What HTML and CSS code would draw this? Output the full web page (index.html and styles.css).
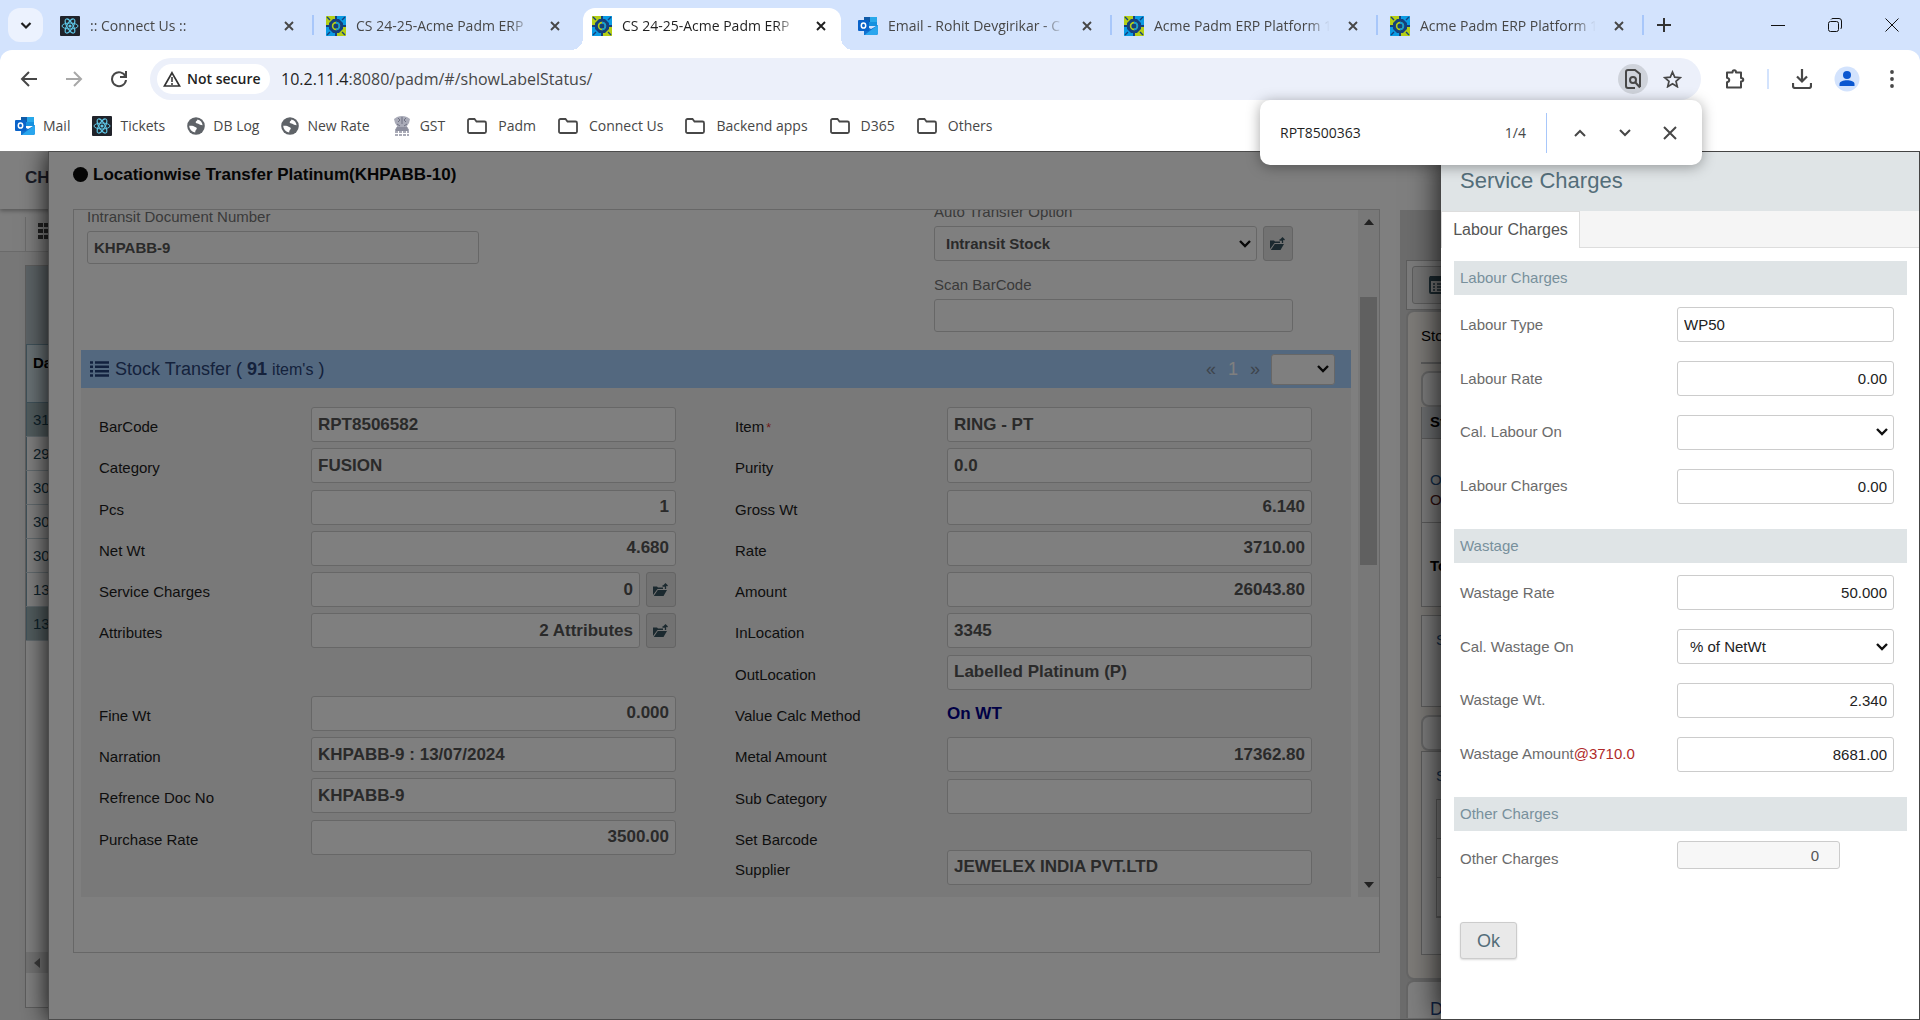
FILE: index.html
```html
<!DOCTYPE html>
<html lang="en">

<head>
  <meta charset="UTF-8">
  <meta name="viewport" content="width=device-width, initial-scale=1.0">
  <title>CS 24-25-Acme Padm ERP</title>
  <link rel="stylesheet" href="styles.css">
</head>

<body>
  <!-- shared icons -->
  <svg class="sprite" aria-hidden="true">
    <symbol id="i-react" viewBox="0 0 20 20">
      <rect width="20" height="20" rx="1" fill="#20232a" />
      <g fill="none" stroke="#5fc8e8" stroke-width="1">
        <ellipse cx="10" cy="10" rx="8" ry="3" />
        <ellipse cx="10" cy="10" rx="8" ry="3" transform="rotate(60 10 10)" />
        <ellipse cx="10" cy="10" rx="8" ry="3" transform="rotate(120 10 10)" />
      </g>
      <circle cx="10" cy="10" r="1.6" fill="#5fc8e8" />
    </symbol>
    <symbol id="i-erp" viewBox="0 0 20 20">
      <rect width="20" height="20" fill="#15407c" />
      <path d="M0 0h9v3H7L5 5 3 7v2H0z" fill="#b5cf16" />
      <path d="M11 0h9v9h-3V7l-4-4h-2z" fill="#0a9be3" />
      <path d="M0 11h3v2l4 4h2v3H0z" fill="#0a9be3" />
      <path d="M20 11v9h-9v-3h2l4-4v-2z" fill="#b5cf16" />
      <circle cx="10" cy="10" r="3.4" fill="none" stroke="#b5cf16" stroke-width="1.6" />
      <path d="M10 6.6a3.4 3.4 0 0 1 0 6.8" fill="none" stroke="#0a9be3" stroke-width="1.6" />
      <path d="M1 1l3 3M19 1l-3 3M1 19l3-3M19 19l-3-3" stroke="#15407c" stroke-width="1.4" />
    </symbol>
    <symbol id="i-outlook" viewBox="0 0 20 20">
      <path d="M6 1h13v9H6z" fill="#1490df" />
      <path d="M6 1h6v5H6z" fill="#0f5ba8" />
      <path d="M12 1h7v5h-7z" fill="#28a8ea" />
      <path d="M6 9l7 4 7-4v8a2 2 0 0 1-2 2H6z" fill="#1373cf" />
      <path d="M20 9L7 18.500a2 2 0 0 0 1 .5h10a2 2 0 0 0 2-2z" fill="#2aa6ee" />
      <rect y="4" width="11" height="11" rx="1" fill="#0a63c9" />
      <ellipse cx="5.500" cy="9.500" rx="2.200" ry="2.600" fill="none" stroke="#fff" stroke-width="1.500" />
    </symbol>
    <symbol id="i-globe" viewBox="0 0 18 18">
      <circle cx="9" cy="9" r="8.800" fill="#5f6368" />
      <path d="M2.200 8.800c2 0 3.800-.6 5 .6 1 1 2.600.4 2.600 2.200 0 1.300-1.600 1.200-1.600 4A6.900 6.900 0 0 1 2.200 8.800zM10.500 2.400c-.4 1.500-1.800 1.500-1.800 2.800 0 1.200 1.600.8 2.600 1.600 1.200 1 2.200 1 4.300 1.400A6.800 6.800 0 0 0 10.500 2.400z" fill="#fff" />
    </symbol>
    <symbol id="i-emblem" viewBox="0 0 20 20">
      <path d="M5 1q5-2 10 0l3 2-1 4-2 3v2l2 1v2H3v-2l2-1v-2L3 7 2 3z" fill="#a9abb8" />
      <path d="M6 2l2 2-2 2M14 2l-2 2 2 2M10 1v7M5 8l3 2M15 8l-3 2M4 12h12M4 14h12" stroke="#6f7182" fill="none" />
      <path d="M3 16h14M3 19h14" stroke="#8e90a0" stroke-width="1.400" stroke-dasharray="3 1" />
    </symbol>
    <symbol id="i-folder" viewBox="0 0 20 16">
      <path d="M2.500 1h5l2 2.500h8a1.500 1.500 0 0 1 1.500 1.500v8.500a1.500 1.500 0 0 1-1.500 1.500h-15A1.500 1.500 0 0 1 1 13.500v-11A1.500 1.500 0 0 1 2.500 1z" fill="none" stroke="#474747" stroke-width="1.800" />
    </symbol>
    <symbol id="i-close" viewBox="0 0 16 16">
      <path d="M4 4l8 8M12 4l-8 8" stroke="currentColor" stroke-width="1.900" fill="none" />
    </symbol>
    <symbol id="i-open" viewBox="0 0 16 14">
      <path d="M0 3.500h4l1 1h5V6H4.500L0 12zM4.800 7H14l-3.500 6H.8z" fill="currentColor" />
      <path d="M9.500 3h3M12.500 6V1.500M10.500 3l2-2 2 2" stroke="currentColor" stroke-width="1.300" fill="none" />
    </symbol>
  </svg>

  <header class="browser">
    <div class="tab-strip">
      <button class="tab-search" aria-label="Search tabs">
        <svg width="12" height="12" viewBox="0 0 12 12"><path d="M1.500 4l4.500 4.500L10.500 4" fill="none" stroke="#1f1f1f" stroke-width="2.200" /></svg>
      </button>
      <div class="tab">
        <svg class="favicon"><use href="#i-react" /></svg>
        <span>:: Connect Us ::</span>
        <button class="tab-close" aria-label="Close"><svg><use href="#i-close" /></svg></button>
      </div>
      <i class="tab-sep"></i>
      <div class="tab">
        <svg class="favicon"><use href="#i-erp" /></svg>
        <span>CS 24-25-Acme Padm ERP</span>
        <button class="tab-close" aria-label="Close"><svg><use href="#i-close" /></svg></button>
      </div>
      <i class="tab-sep hidden"></i>
      <div class="tab active">
        <svg class="favicon"><use href="#i-erp" /></svg>
        <span>CS 24-25-Acme Padm ERP</span>
        <button class="tab-close" aria-label="Close"><svg><use href="#i-close" /></svg></button>
      </div>
      <i class="tab-sep hidden"></i>
      <div class="tab">
        <svg class="favicon"><use href="#i-outlook" /></svg>
        <span>Email - Rohit Devgirikar - C</span>
        <button class="tab-close" aria-label="Close"><svg><use href="#i-close" /></svg></button>
      </div>
      <i class="tab-sep"></i>
      <div class="tab">
        <svg class="favicon"><use href="#i-erp" /></svg>
        <span>Acme Padm ERP Platform 1</span>
        <button class="tab-close" aria-label="Close"><svg><use href="#i-close" /></svg></button>
      </div>
      <i class="tab-sep"></i>
      <div class="tab">
        <svg class="favicon"><use href="#i-erp" /></svg>
        <span>Acme Padm ERP Platform 1</span>
        <button class="tab-close" aria-label="Close"><svg><use href="#i-close" /></svg></button>
      </div>
      <i class="tab-sep"></i>
      <button class="new-tab" aria-label="New tab">
        <svg width="14" height="14" viewBox="0 0 14 14"><path d="M7 0v14M0 7h14" stroke="#333" stroke-width="2" /></svg>
      </button>
      <div class="window-controls">
        <button aria-label="Minimise"><svg width="14" height="14" viewBox="0 0 14 14"><path d="M0 7.500h14" stroke="#111" /></svg></button>
        <button aria-label="Restore"><svg width="14" height="14" viewBox="0 0 14 14"><rect x=".5" y="3.500" width="10" height="10" rx="2" fill="none" stroke="#111" /><path d="M3 1.500q.5-1 2-1h6a2.500 2.500 0 0 1 2.500 2.500v6q0 1.500-1 2" fill="none" stroke="#111" /></svg></button>
        <button aria-label="Close window"><svg width="14" height="14" viewBox="0 0 14 14"><path d="M.5.5l13 13M13.500.5l-13 13" stroke="#111" /></svg></button>
      </div>
    </div>

    <div class="toolbar">
      <button class="nav" aria-label="Back"><svg width="18" height="18" viewBox="0 0 18 18"><path d="M17 9H2M9 2L2 9l7 7" fill="none" stroke="#474747" stroke-width="2" /></svg></button>
      <button class="nav" aria-label="Forward"><svg width="18" height="18" viewBox="0 0 18 18"><path d="M1 9h15M9 2l7 7-7 7" fill="none" stroke="#a8a8a8" stroke-width="2" /></svg></button>
      <button class="nav" aria-label="Reload"><svg width="18" height="18" viewBox="0 0 18 18"><path d="M15.500 6.500A7 7 0 1 0 16 10" fill="none" stroke="#474747" stroke-width="2" /><path d="M16 1v6h-6" fill="none" stroke="#474747" stroke-width="2" /></svg></button>
      <div class="omnibox">
        <button class="not-secure">
          <svg width="18" height="16" viewBox="0 0 18 16"><path d="M9 1.800L16.600 15H1.400z" fill="none" stroke="#333" stroke-width="1.700" /><path d="M9 6v5M9 12v2" stroke="#333" stroke-width="1.500" /></svg>
          Not secure
        </button>
        <span class="url"><b>10.2.11.4</b>:8080/padm/#/showLabelStatus/</span>
        <button class="round on" aria-label="Find in page"><svg width="18" height="20" viewBox="0 0 18 20"><path d="M11 19H4a2 2 0 0 1-2-2V3a2 2 0 0 1 2-2h7l5 4v13" fill="none" stroke="#474747" stroke-width="2" /><circle cx="9" cy="11" r="3" fill="none" stroke="#474747" stroke-width="2" /><path d="M11 13l5 5.500" stroke="#474747" stroke-width="2" /></svg></button>
        <button class="round" aria-label="Bookmark"><svg width="19" height="18" viewBox="0 0 19 18"><path d="M9.500 2l2.200 5.100 5.500.5-4.200 3.700 1.300 5.400-4.800-2.900-4.800 2.900L6 11.300 1.800 7.600l5.500-.5z" fill="none" stroke="#474747" stroke-width="1.700" /></svg></button>
      </div>
      <div class="toolbar-right">
        <button aria-label="Extensions"><svg width="20" height="20" viewBox="0 0 20 20"><path d="M2 3.500h5.500c0-3 3.500-3 3.500 0h5v5.500c3 0 3 3.500 0 3.500v6H2v-5.200c3-.6 3-4 0-4.600z" fill="none" stroke="#474747" stroke-width="2" stroke-linejoin="round" /></svg></button>
        <i></i>
        <button aria-label="Downloads"><svg width="20" height="20" viewBox="0 0 20 20"><path d="M10 0v12M5 7.500l5 5 5-5M1 14v3a2 2 0 0 0 2 2h14a2 2 0 0 0 2-2v-3" fill="none" stroke="#474747" stroke-width="2.200" /></svg></button>
        <button aria-label="Profile"><svg width="26" height="26" viewBox="0 0 26 26"><circle cx="13" cy="13" r="12.500" fill="#d3e3fd" /><circle cx="13" cy="9" r="4" fill="#0b57d0" /><path d="M5.500 20v-2c0-5 15-5 15 0v2z" fill="#0b57d0" /></svg></button>
        <button aria-label="Menu"><svg width="6" height="20" viewBox="0 0 6 20"><g fill="#474747"><circle cx="3" cy="3" r="1.900" /><circle cx="3" cy="10" r="1.900" /><circle cx="3" cy="17" r="1.900" /></g></svg></button>
      </div>
    </div>

    <nav class="bookmarks">
      <a href="#"><svg width="20" height="20"><use href="#i-outlook" /></svg>Mail</a>
      <a href="#"><svg width="20" height="20"><use href="#i-react" /></svg>Tickets</a>
      <a href="#"><svg width="18" height="18"><use href="#i-globe" /></svg>DB Log</a>
      <a href="#"><svg width="18" height="18"><use href="#i-globe" /></svg>New Rate</a>
      <a href="#"><svg width="20" height="20"><use href="#i-emblem" /></svg>GST</a>
      <a href="#" class="folder"><svg width="20" height="16"><use href="#i-folder" /></svg>Padm</a>
      <a href="#" class="folder"><svg width="20" height="16"><use href="#i-folder" /></svg>Connect Us</a>
      <a href="#" class="folder"><svg width="20" height="16"><use href="#i-folder" /></svg>Backend apps</a>
      <a href="#" class="folder"><svg width="20" height="16"><use href="#i-folder" /></svg>D365</a>
      <a href="#" class="folder"><svg width="20" height="16"><use href="#i-folder" /></svg>Others</a>
    </nav>

    <div class="find-bar">
      <input type="text" value="RPT8500363" aria-label="Find">
      <span>1/4</span>
      <i></i>
      <button aria-label="Previous"><svg width="14" height="14" viewBox="0 0 14 14"><path d="M2 10l5-5 5 5" fill="none" stroke="#474747" stroke-width="2" /></svg></button>
      <button aria-label="Next"><svg width="14" height="14" viewBox="0 0 14 14"><path d="M2 4l5 5 5-5" fill="none" stroke="#474747" stroke-width="2" /></svg></button>
      <button aria-label="Close find bar"><svg width="14" height="14" viewBox="0 0 14 14"><path d="M1 1l12 12M13 1L1 13" fill="none" stroke="#474747" stroke-width="2" /></svg></button>
    </div>
  </header>

  <main class="app">
    <!-- page behind the modal -->
    <div class="page">
      <div class="page-header">CH</div>
      <div class="page-tools">
        <div>
          <svg width="18" height="16" viewBox="0 0 18 16"><path d="M0 0h5v4H0zM6 0h5v4H6zM12 0h5v4h-5zM0 6h5v4H0zM6 6h5v4H6zM12 6h5v4h-5zM0 12h5v4H0zM6 12h5v4H6zM12 12h5v4h-5z" fill="#444" /></svg>
        </div>
      </div>
      <div class="page-panel">
        <div class="panel-band"></div>
        <table>
          <thead>
            <tr><th>Da</th></tr>
          </thead>
          <tbody>
            <tr class="selected"><td>31</td></tr>
            <tr><td>29</td></tr>
            <tr><td>30</td></tr>
            <tr><td>30</td></tr>
            <tr><td>30</td></tr>
            <tr><td>13</td></tr>
            <tr class="selected"><td>13</td></tr>
          </tbody>
        </table>
        <div class="panel-scroll">
          <svg width="6" height="10" viewBox="0 0 6 10"><path d="M6 0v10L0 5z" fill="#777" /></svg>
        </div>
      </div>
    </div>

    <section class="modal">
      <h1><i></i>Locationwise Transfer Platinum(KHPABB-10)</h1>
      <div class="modal-body">
        <div class="box">
          <div class="scroll">
            <div class="content">
              <div class="filters">
                <div class="filter-left">
                  <label for="docNo">Intransit Document Number</label>
                  <input id="docNo" type="text" value="KHPABB-9">
                </div>
                <div class="filter-right">
                  <label for="option">Auto Transfer Option</label>
                  <div class="with-btn">
                    <select id="option"><option>Intransit Stock</option></select>
                    <button class="open-btn" aria-label="Open"><svg width="16" height="14"><use href="#i-open" /></svg></button>
                  </div>
                  <label for="scan" class="second">Scan BarCode</label>
                  <input id="scan" type="text">
                </div>
              </div>
              <div class="stock-header">
                <svg width="19" height="16" viewBox="0 0 19 16"><path d="M0 1.500h3M5 1.500h14M0 5.800h3M5 5.800h14M0 10.200h3M5 10.200h14M0 14.500h3M5 14.500h14" stroke="#24427c" stroke-width="2.400" /></svg>
                <h2>Stock Transfer ( <b>91</b> <small>item's</small> )</h2>
                <div class="pager">
                  <a href="#">«</a>
                  <a href="#" class="current">1</a>
                  <a href="#">»</a>
                  <select aria-label="Page"><option></option></select>
                </div>
              </div>
              <div class="stock-form">
                <div class="col-left">
                  <div class="row"><label for="f1">BarCode</label><input id="f1" type="text" value="RPT8506582"></div>
                  <div class="row"><label for="f2">Category</label><input id="f2" type="text" value="FUSION"></div>
                  <div class="row"><label for="f3">Pcs</label><input id="f3" class="num" type="text" value="1"></div>
                  <div class="row"><label for="f4">Net Wt</label><input id="f4" class="num" type="text" value="4.680"></div>
                  <div class="row"><label for="f5">Service Charges</label>
                    <div class="with-btn"><input id="f5" class="num" type="text" value="0"><button class="open-btn" aria-label="Open"><svg width="16" height="14"><use href="#i-open" /></svg></button></div>
                  </div>
                  <div class="row"><label for="f6">Attributes</label>
                    <div class="with-btn"><input id="f6" class="num" type="text" value="2 Attributes"><button class="open-btn" aria-label="Open"><svg width="16" height="14"><use href="#i-open" /></svg></button></div>
                  </div>
                  <div class="row"></div>
                  <div class="row"><label for="f8">Fine Wt</label><input id="f8" class="num" type="text" value="0.000"></div>
                  <div class="row"><label for="f9">Narration</label><input id="f9" type="text" value="KHPABB-9 : 13/07/2024"></div>
                  <div class="row"><label for="f10">Refrence Doc No</label><input id="f10" type="text" value="KHPABB-9"></div>
                  <div class="row"><label for="f11">Purchase Rate</label><input id="f11" class="num" type="text" value="3500.00"></div>
                </div>
                <div class="col-right">
                  <div class="row"><label for="g1">Item<sup>*</sup></label><input id="g1" type="text" value="RING - PT"></div>
                  <div class="row"><label for="g2">Purity</label><input id="g2" type="text" value="0.0"></div>
                  <div class="row"><label for="g3">Gross Wt</label><input id="g3" class="num" type="text" value="6.140"></div>
                  <div class="row"><label for="g4">Rate</label><input id="g4" class="num" type="text" value="3710.00"></div>
                  <div class="row"><label for="g5">Amount</label><input id="g5" class="num" type="text" value="26043.80"></div>
                  <div class="row"><label for="g6">InLocation</label><input id="g6" type="text" value="3345"></div>
                  <div class="row"><label for="g7">OutLocation</label><input id="g7" type="text" value="Labelled Platinum (P)"></div>
                  <div class="row"><span>Value Calc Method</span><b>On WT</b></div>
                  <div class="row"><label for="g9">Metal Amount</label><input id="g9" class="num" type="text" value="17362.80"></div>
                  <div class="row"><label for="g10">Sub Category</label><input id="g10" type="text"></div>
                  <div class="row"><span>Set Barcode</span></div>
                  <div class="row"><label for="g12">Supplier</label><input id="g12" type="text" value="JEWELEX INDIA PVT.LTD"></div>
                </div>
              </div>
            </div>
            <div class="scrollbar">
              <svg width="10" height="6" viewBox="0 0 10 6"><path d="M0 6l5-6 5 6z" fill="#444" /></svg>
              <div class="thumb"></div>
              <svg width="10" height="6" viewBox="0 0 10 6"><path d="M0 0l5 6 5-6z" fill="#444" /></svg>
            </div>
          </div>
        </div>

        <aside class="side">
          <div class="side-tools">
            <button aria-label="List"><svg width="22" height="18" viewBox="0 0 22 18"><rect x="1" y="1" width="20" height="16" rx="1" fill="none" stroke="#37525e" stroke-width="2" /><path d="M1 0h20v5H1z" fill="#37525e" /><path d="M4 8h2M8 8h10M4 11h2M8 11h10M4 14h2M8 14h10" stroke="#37525e" stroke-width="1.500" /></svg></button>
          </div>
          <div class="card">
            <h3>Sto</h3>
            <div class="side-tab"></div>
            <table class="side-table">
              <thead><tr><th>St</th></tr></thead>
              <tbody>
                <tr><td><a href="#">O</a><br><span>O</span></td></tr>
                <tr><td><b>To</b></td></tr>
              </tbody>
            </table>
            <div class="side-block"><a href="#">S</a></div>
            <div class="side-tab"></div>
            <div class="side-block tall">
              <a href="#">S</a>
              <div class="cells"><i></i><i></i><i></i></div>
            </div>
          </div>
          <div class="card next"><h3>D</h3></div>
        </aside>
      </div>
    </section>

    <div class="backdrop"></div>

    <section class="drawer">
      <h2>Service Charges</h2>
      <div class="drawer-tabs"><button>Labour Charges</button></div>
      <div class="drawer-body">
        <h3>Labour Charges</h3>
        <div class="fields">
          <div class="field"><label for="d1">Labour Type</label><input id="d1" type="text" value="WP50"></div>
          <div class="field"><label for="d2">Labour Rate</label><input id="d2" class="num" type="text" value="0.00"></div>
          <div class="field"><label for="d3">Cal. Labour On</label><select id="d3"><option></option></select></div>
          <div class="field"><label for="d4">Labour Charges</label><input id="d4" class="num" type="text" value="0.00"></div>
        </div>
        <h3>Wastage</h3>
        <div class="fields">
          <div class="field"><label for="d5">Wastage Rate</label><input id="d5" class="num" type="text" value="50.000"></div>
          <div class="field"><label for="d6">Cal. Wastage On</label><select id="d6"><option>% of NetWt</option></select></div>
          <div class="field"><label for="d7">Wastage Wt.</label><input id="d7" class="num" type="text" value="2.340"></div>
          <div class="field"><label for="d8">Wastage Amount<em>@3710.0</em></label><input id="d8" class="num" type="text" value="8681.00"></div>
        </div>
        <h3>Other Charges</h3>
        <div class="field other"><label for="d9">Other Charges</label><input id="d9" class="num" type="text" value="0" readonly></div>
        <button class="ok">Ok</button>
      </div>
    </section>
  </main>
</body>

</html>
```

FILE: styles.css
```css
* {
  box-sizing: border-box;
}

body {
  margin: 0;
  min-height: 100vh;
  display: flex;
  flex-direction: column;
  font-family: "Liberation Sans", Arial, sans-serif;
  font-size: 15px;
  line-height: 20px;
  background-color: #fff;
}

button,
input,
select {
  font: inherit;
  color: inherit;
}

button {
  display: flex;
  align-items: center;
  justify-content: center;
  padding: 0;
  border: 0;
  background: none;
  cursor: pointer;
}

svg {
  flex: none;
}

a {
  text-decoration: none;
}

h1,
h2,
h3 {
  margin: 0;
  font-weight: normal;
}

.sprite {
  position: absolute;
  width: 0;
  height: 0;
}

/* browser */
.browser {
  position: relative;
  z-index: 2;
  height: 151px;
  background-color: #d3e3fd;
  font-family: "Open Sans", "Noto Sans", sans-serif;
  font-size: 14px;
  color: #474747;
}

.tab-strip {
  display: flex;
  align-items: center;
  height: 50px;
  padding-left: 8px;
}

.tab-search {
  width: 35px;
  height: 34px;
  margin-right: 8px;
  border-radius: 12px;
  background-color: #ecf2fe;
}

.tab {
  position: relative;
  display: flex;
  align-items: center;
  flex: 0 1 258px;
  min-width: 0;
  height: 42px;
  padding: 0 12px 6px 9px;
  align-self: flex-end;
}

.tab .favicon {
  width: 20px;
  height: 20px;
}

.tab span {
  flex: 1;
  min-width: 0;
  margin: 0 10px;
  overflow: hidden;
  white-space: nowrap;
  -webkit-mask-image: linear-gradient(to right, #000 85%, transparent 97%);
  mask-image: linear-gradient(to right, #000 85%, transparent 97%);
}

.tab-close svg {
  width: 16px;
  height: 16px;
}

.tab.active {
  color: #1f1f1f;
  background-color: #fff;
  border-radius: 12px 12px 0 0;
}

.tab.active::before,
.tab.active::after {
  content: "";
  position: absolute;
  bottom: 0;
  width: 12px;
  height: 12px;
}

.tab.active::before {
  left: -12px;
  background: radial-gradient(circle at 0 0, transparent 12px, #fff 12px);
}

.tab.active::after {
  right: -12px;
  background: radial-gradient(circle at 100% 0, transparent 12px, #fff 12px);
}

.tab-sep {
  width: 2px;
  height: 20px;
  margin: 0 3px;
  background-color: #a8c7fa;
}

.tab-sep.hidden {
  visibility: hidden;
}

.new-tab {
  width: 34px;
}

.window-controls {
  display: flex;
  margin-left: auto;
}

.window-controls button {
  width: 57px;
  height: 48px;
}

.toolbar {
  display: flex;
  align-items: center;
  height: 58px;
  padding: 0 6px;
  background-color: #fff;
  border-radius: 12px 12px 0 0;
}

.toolbar .nav {
  width: 45px;
  height: 40px;
}

.omnibox {
  display: flex;
  align-items: center;
  flex: 1;
  height: 42px;
  margin-left: 9px;
  padding: 0 14px 0 7px;
  border-radius: 21px;
  background-color: #ecf0fa;
}

.not-secure {
  justify-content: flex-start;
  gap: 6px;
  width: 113px;
  height: 30px;
  padding-left: 6px;
  border-radius: 15px;
  background-color: #fff;
  color: #1f1f1f;
  font-weight: 600;
  white-space: nowrap;
}

.url {
  flex: 1;
  margin-left: 11px;
  font-size: 16px;
}

.url b {
  font-weight: normal;
  color: #1f1f1f;
}

.round {
  width: 30px;
  height: 30px;
  margin-left: 9px;
  border-radius: 50%;
}

.round.on {
  background-color: #cfd3db;
}

.toolbar-right {
  display: flex;
  align-items: center;
}

.toolbar-right button {
  width: 45px;
  height: 40px;
}

.toolbar-right button:first-child {
  margin-left: 11px;
}

.toolbar-right i {
  width: 2px;
  height: 20px;
  margin: 0 10px;
  background-color: #d3e3fd;
}

.bookmarks {
  display: flex;
  gap: 22px;
  height: 43px;
  padding-left: 15px;
  padding-bottom: 8px;
  background-color: #fff;
}

.bookmarks a {
  display: flex;
  align-items: center;
  gap: 8px;
  color: #474747;
}

.bookmarks .folder {
  gap: 11px;
}

.find-bar {
  position: absolute;
  top: 100px;
  right: 218px;
  display: flex;
  align-items: center;
  width: 442px;
  height: 65px;
  padding: 0 10px 0 20px;
  border-radius: 10px;
  background-color: #fff;
  box-shadow: 0 2px 14px rgba(0, 0, 0, 0.35);
}

.find-bar input {
  flex: 1;
  min-width: 0;
  padding: 0;
  border: 0;
  outline: 0;
  color: #1f1f1f;
}

.find-bar i {
  width: 1px;
  height: 40px;
  margin: 0 10px 0 20px;
  background-color: #a8c7fa;
}

.find-bar button {
  width: 45px;
  height: 40px;
}

/* app: page, modal, backdrop and drawer share one cell */
.app {
  flex: 1;
  display: grid;
  grid-template-columns: minmax(0, 1fr);
  overflow: hidden;
}

.page,
.modal,
.backdrop,
.drawer {
  grid-area: 1 / 1;
}

.page {
  background-color: #efefef;
}

.page-header {
  position: relative;
  height: 58px;
  padding: 17px 25px;
  background-color: #fff;
  box-shadow: 0 2px 4px rgba(0, 0, 0, 0.3);
  font-size: 17px;
  font-weight: bold;
  color: #35394e;
}

.page-tools {
  height: 43px;
  padding: 8px 0 0 25px;
  background-color: #fafafa;
  border-bottom: 1px solid #d5d5d5;
}

.page-tools div {
  height: 34px;
  padding: 6px 12px;
  border-left: 1px solid #d5d5d5;
}

.page-panel {
  display: flex;
  flex-direction: column;
  height: 743px;
  margin: 13px 0 12px 25px;
  border: 1px solid #bbb;
  background-color: #fff;
}

.panel-band {
  height: 78px;
  background-color: #b9c6cc;
}

.page-panel table {
  width: 100%;
  border-collapse: collapse;
  border-left: 1px solid #7fa3b3;
}

.page-panel th {
  height: 58px;
  padding: 8px 6px;
  text-align: left;
  vertical-align: top;
  background-color: #d2e3ea;
  border: 1px solid #7fa3b3;
}

.page-panel td {
  height: 34px;
  padding: 0 6px;
  color: #1a4455;
  border-bottom: 1px solid #c3d3da;
}

.page-panel .selected td {
  background-color: #a3b8bc;
}

.panel-scroll {
  display: flex;
  align-items: center;
  height: 21px;
  margin-top: auto;
  margin-bottom: 34px;
  padding-left: 8px;
  background-color: #e6e6e6;
}

.backdrop {
  z-index: 1;
  background-color: rgba(0, 0, 0, 0.5);
}

/* modal */
.modal {
  z-index: 1;
  display: flex;
  flex-direction: column;
  margin-left: 48px;
  border: 1px solid #999;
  border-width: 1px 0 1px 1px;
  background-color: #fff;
  box-shadow: 0 0 24px rgba(0, 0, 0, 0.9);
}

.modal h1 {
  display: flex;
  align-items: center;
  gap: 5px;
  height: 57px;
  padding: 0 0 12px 24px;
  font-size: 17px;
  font-weight: bold;
  color: #0a0a0a;
}

.modal h1 i {
  width: 15px;
  height: 15px;
  border-radius: 50%;
  background-color: #0a0a0a;
}

.modal-body {
  flex: 1;
  display: flex;
  padding-left: 24px;
}

.box {
  flex: 1;
  min-width: 0;
  margin: 0 20px 66px 0;
  border: 1px solid #cfcfcf;
}

.scroll {
  display: flex;
  overflow: hidden;
}

.content {
  flex: 1;
  min-width: 0;
  padding: 0 7px;
}

.scrollbar {
  display: flex;
  flex-direction: column;
  align-items: center;
  width: 21px;
  padding: 9px 2px;
  background-color: #f1f1f1;
}

.scrollbar .thumb {
  width: 17px;
  height: 268px;
  margin: 72px 0 auto;
  background-color: #c1c1c1;
}

.box input,
.box select {
  width: 100%;
  height: 35px;
  padding: 0 6px;
  border: 1px solid #cfcfcf;
  border-radius: 3px;
  background-color: #fff;
  color: #555;
  font-weight: bold;
}

.box select,
.drawer select {
  appearance: none;
  background-image: url("data:image/svg+xml,%3Csvg xmlns='http://www.w3.org/2000/svg' width='12' height='8' viewBox='0 0 12 8'%3E%3Cpath d='M1 1l5 5 5-5' fill='none' stroke='%23111' stroke-width='2.4'/%3E%3C/svg%3E");
  background-repeat: no-repeat;
  background-position: right 5px center;
}

.filters {
  display: flex;
  justify-content: space-between;
  height: 148px;
  margin-top: -8px;
  padding: 0 58px 0 6px;
  color: #757575;
}

.filter-left {
  width: 392px;
  padding-top: 5px;
}

.filter-right {
  width: 359px;
}

.filters label {
  display: block;
  margin-bottom: 4px;
}

.filters label.second {
  margin-top: 14px;
}

.filters input {
  height: 33px;
}

.filters select {
  padding-left: 11px;
}

.with-btn {
  display: flex;
  gap: 6px;
}

.open-btn {
  flex: none;
  width: 30px;
  height: 35px;
  border: 1px solid #c8c8c8;
  border-radius: 3px;
  background-color: #e4e4e4;
  color: #37525e;
}

.stock-header {
  display: flex;
  align-items: center;
  gap: 6px;
  height: 38px;
  padding: 0 16px 0 9px;
  background-color: #a7d0ff;
  color: #2a4478;
}

.stock-header h2 {
  font-size: 18px;
}

.stock-header b {
  font-size: 18px;
}

.stock-header small {
  font-size: 16px;
}

.pager {
  display: flex;
  align-items: center;
  margin-left: auto;
  font-size: 18px;
}

.pager a {
  width: 22px;
  text-align: center;
  color: #7c8a99;
}

.pager .current {
  color: #fff;
}

.box .pager select {
  width: 64px;
  height: 31px;
  margin-left: 5px;
}

.stock-form {
  display: flex;
  justify-content: space-between;
  gap: 59px;
  padding: 19px 39px 6px 18px;
  background-color: #f2f2f2;
  color: #1c1c1c;
}

.col-left,
.col-right {
  flex: 1;
  min-width: 0;
  display: grid;
}

.col-left {
  grid-template-rows: repeat(11, 1fr);
  height: 454px;
}

.col-right {
  grid-template-rows: repeat(10, 1fr) 30px 41px;
  height: 484px;
}

.row {
  display: grid;
  grid-template-columns: 212px 1fr;
  align-items: start;
}

.row label,
.row span {
  padding-top: 10px;
}

.row b {
  padding-top: 8px;
  font-size: 17px;
  color: #00008b;
}

.row sup {
  margin-left: 2px;
  vertical-align: baseline;
  color: #d33;
}

.row input {
  font-size: 17px;
}

.num {
  text-align: right;
}

/* cards to the right of the form */
.side {
  width: 520px;
  padding: 50px 0 0 6px;
  margin-top: 1px;
  background-color: #d8d8d8;
}

.side-tools {
  height: 50px;
  padding: 5px;
  border: 1px solid #bbb;
  background-color: #f6f6f6;
}

.side-tools button {
  width: 100%;
  height: 38px;
  padding-left: 16px;
  justify-content: flex-start;
  border: 1px solid #bbb;
  border-radius: 3px;
  background-color: #e8e8e8;
}

.card {
  height: 670px;
  padding: 14px 0 0 13px;
  border: 2px solid #ccc;
  border-radius: 8px;
  background-color: #faf6f0;
}

.card h3 {
  height: 38px;
  margin-bottom: 7px;
  border-bottom: 2px solid #bbb;
  font-size: 15px;
}

.side-tab {
  height: 36px;
  border: 2px solid #ccc;
  border-radius: 8px;
  background-color: #fff;
}

.side-table {
  width: 100%;
  border-collapse: collapse;
  background-color: #fff;
  border-left: 1px solid #bbb;
}

.side-table th {
  height: 31px;
  padding: 0 8px;
  text-align: left;
  background-color: #dce0e4;
  border-bottom: 1px solid #bbb;
}

.side-table td {
  height: 84px;
  padding: 4px 8px 0;
  border-bottom: 1px solid #bbb;
}

.side-table tr:first-child td {
  padding: 31px 8px 12px;
}

.side-table span {
  color: #5a1a1a;
}

.side a {
  color: #2a5d96;
}

.side-block {
  height: 92px;
  margin: 8px 0;
  padding: 14px;
  border: 1px solid #bbb;
  background-color: #fff;
}

.side-block.tall {
  height: 204px;
  margin: 0;
}

.cells {
  margin-top: 13px;
  border: 1px solid #bbb;
}

.cells i {
  display: block;
  height: 39px;
  border-bottom: 1px solid #bbb;
}

.card.next {
  height: 38px;
  padding: 17px 22px 0;
  border-bottom: 0;
  border-radius: 8px 8px 0 0;
  background-color: #fff;
}

.card.next h3 {
  height: 20px;
  margin: 0;
  border: 0;
  font-size: 18px;
  color: #1f4788;
}

/* drawer */
.drawer {
  z-index: 1;
  justify-self: end;
  width: 479px;
  border: 1px solid #444;
  border-left: 0;
  background-color: #fff;
  box-shadow: 0 0 30px rgba(0, 0, 0, 0.9);
  color: #6b6b6b;
}

.drawer h2 {
  height: 59px;
  padding: 0 19px;
  line-height: 58px;
  font-size: 22px;
  color: #546e7a;
  background-color: #dfe4e6;
}

.drawer-tabs {
  height: 37px;
  border-bottom: 1px solid #ddd;
  background-color: #f5f5f5;
}

.drawer-tabs button {
  width: 139px;
  height: 37px;
  border: 1px solid #ddd;
  border-bottom: 0;
  background-color: #fff;
  color: #555;
  font-size: 16px;
}

.drawer-body {
  padding: 13px 12px 0 13px;
}

.drawer h3 {
  height: 34px;
  margin-bottom: 3px;
  padding: 0 6px;
  line-height: 34px;
  font-size: 15px;
  color: #78909c;
  background-color: #dfe4e6;
}

.fields {
  display: grid;
  grid-template-rows: repeat(4, 1fr);
  height: 215px;
  margin-bottom: 16px;
}

.field {
  display: grid;
  grid-template-columns: 217px 1fr;
  align-items: center;
  padding: 0 13px 0 6px;
}

.field em {
  font-style: normal;
  color: #b02a2a;
}

.field input,
.field select {
  width: 100%;
  height: 35px;
  padding: 0 6px;
  border: 1px solid #ccc;
  border-radius: 3px;
  background-color: #fff;
  color: #222;
}

.drawer .field select {
  padding-left: 12px;
}

.field.other {
  align-items: start;
  margin-top: 10px;
}

.field.other label {
  padding-top: 8px;
}

.field.other input {
  width: 163px;
  height: 28px;
  padding-right: 20px;
  background-color: #f7f7f7;
  color: #555;
}

.ok {
  width: 57px;
  height: 37px;
  margin: 53px 6px 0;
  border: 1px solid #ccc;
  border-radius: 3px;
  background-color: #e9e9e9;
  box-shadow: 0 1px 2px rgba(0, 0, 0, 0.15);
  color: #546e7a;
  font-size: 18px;
}
```
